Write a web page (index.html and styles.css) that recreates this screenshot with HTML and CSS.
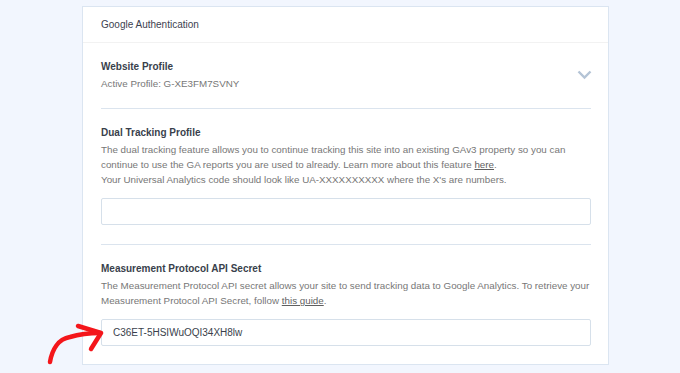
FILE: index.html
```html
<!DOCTYPE html>
<html lang="en">
<head>
    <meta charset="UTF-8">
    <meta name="viewport" content="width=device-width, initial-scale=1.0">
    <title>Google Authentication</title>
    <link rel="stylesheet" href="styles.css">
</head>
<body>
    <div class="card">
        <div class="card-header">Google Authentication</div>

        <div class="card-body">
            <div class="section profile">
                <div>
                    <div class="label">Website Profile</div>
                    <div class="text">Active Profile: G-XE3FM7SVNY</div>
                </div>
                <svg class="chevron" width="15" height="10" viewBox="0 0 15 10">
                    <polyline points="1.5,1.5 7.5,7.5 13.5,1.5" fill="none" stroke="#b4c4d6" stroke-width="2.4"/>
                </svg>
            </div>

            <div class="section">
                <div class="label">Dual Tracking Profile</div>
                <p class="text">The dual tracking feature allows you to continue tracking this site into an existing GAv3 property so you can continue to use the GA reports you are used to already. Learn more about this feature <a href="#">here</a>.<br>Your Universal Analytics code should look like UA-XXXXXXXXXX where the X's are numbers.</p>
                <input class="field" type="text" value="">
            </div>

            <div class="section">
                <div class="label">Measurement Protocol API Secret</div>
                <p class="text">The Measurement Protocol API secret allows your site to send tracking data to Google Analytics. To retrieve your Measurement Protocol API Secret, follow <a href="#">this guide</a>.</p>
                <input class="field" type="text" value="C36ET-5HSIWuOQI34XH8lw">
            </div>
        </div>
    </div>

    <svg class="arrow" width="110" height="373" viewBox="0 0 110 373">
        <path d="M50 362 C52 350 58 339 70 337 C80 334 90 333 100 333" fill="none" stroke="#f4161b" stroke-width="4.5" stroke-linecap="round"/>
        <path d="M78 326 L101 333 L91 349" fill="none" stroke="#f4161b" stroke-width="4.5" stroke-linecap="round" stroke-linejoin="round"/>
    </svg>
</body>
</html>
```

FILE: styles.css
```css
* {
    box-sizing: border-box;
}

body {
    margin: 0;
    background-color: #f2f6fe;
    font-family: "Liberation Sans", Arial, sans-serif;
    font-size: 10px;
    line-height: 15px;
    color: #393f4c;
}

.card {
    margin: 6px 0 0 82px;
    width: 527px;
    background-color: #fff;
    border: 1px solid #dbe5f1;
}

.card-header {
    height: 36px;
    padding: 0 18px;
    line-height: 35px;
    border-bottom: 1px solid #f2f2f2;
    color: #3d4250;
}

.card-body {
    padding: 0 17px 0 18px;
}

.section {
    padding: 16px 0 19px;
    border-bottom: 1px solid #dbe4ee;
}

.section:last-child {
    border-bottom: none;
    padding-bottom: 18px;
}

.profile {
    display: flex;
    justify-content: space-between;
    align-items: center;
    padding-bottom: 17px;
}

.chevron {
    margin-right: -1px;
}

.label {
    font-weight: bold;
    margin-bottom: 2px;
}

.text {
    margin: 0;
    font-size: 9.8px;
    color: #777;
}

.text a {
    color: #5f5f5f;
}

.field {
    display: block;
    width: 100%;
    height: 27px;
    margin-top: 11px;
    padding: 0 11px;
    border: 1px solid #d6e0ea;
    border-radius: 2px;
    font-family: "Liberation Sans", Arial, sans-serif;
    font-size: 10px;
    color: #393f4c;
    background-color: #fff;
    outline: none;
}

.arrow {
    position: absolute;
    left: 0;
    top: 0;
}
```
